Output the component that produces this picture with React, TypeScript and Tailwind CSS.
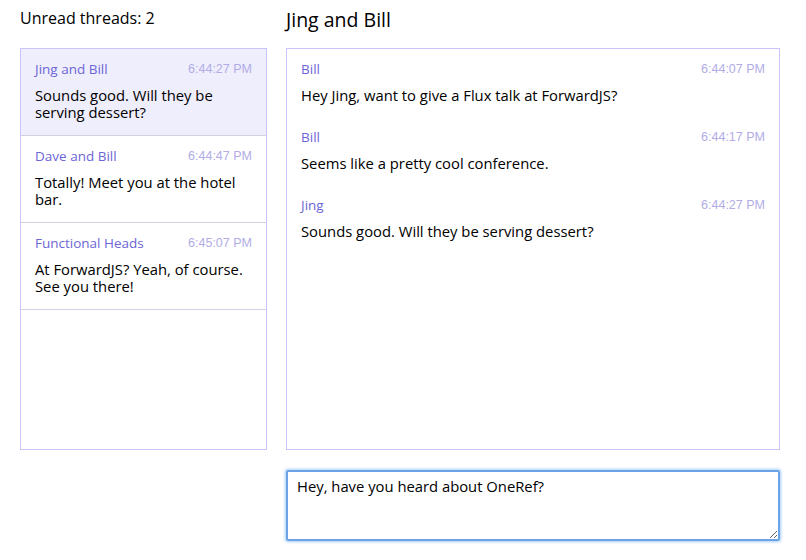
import React from 'react';

const threads = [
  { name: 'Jing and Bill', time: '6:44:27 PM', text: 'Sounds good. Will they be serving dessert?', active: true },
  { name: 'Dave and Bill', time: '6:44:47 PM', text: 'Totally! Meet you at the hotel bar.', active: false },
  { name: 'Functional Heads', time: '6:45:07 PM', text: 'At ForwardJS? Yeah, of course. See you there!', active: false },
];

const messages = [
  { author: 'Bill', time: '6:44:07 PM', text: 'Hey Jing, want to give a Flux talk at ForwardJS?' },
  { author: 'Bill', time: '6:44:17 PM', text: 'Seems like a pretty cool conference.' },
  { author: 'Jing', time: '6:44:27 PM', text: 'Sounds good. Will they be serving dessert?' },
];

const font = "font-['Open_Sans','Noto_Sans',sans-serif]";
const timeFont = "font-['Liberation_Sans',Arial,sans-serif]";

export default function App() {
  return (
    <div className={`${font} w-[806px] h-[560px] bg-white text-black flex gap-[19px] pl-[20px] pt-[8px]`}>
      {/* thread list */}
      <div className="w-[247px] flex flex-col">
        <div className="h-[20px] leading-[20px] text-[16px]">Unread threads: 2</div>
        <div className="mt-[20px] h-[402px] border border-[#c9c5fb] flex flex-col">
          {threads.map((t) => (
            <div
              key={t.name}
              className={`px-[14px] pt-[12px] pb-[14px] border-b border-[#d3d0e6] ${t.active ? 'bg-[#efeefd]' : 'bg-white'}`}
            >
              <div className="flex justify-between items-center h-[16px]">
                <span className="text-[13.5px] text-[#6d66d6]">{t.name}</span>
                <span className={`${timeFont} text-[12.5px] text-[#b1ace6]`}>{t.time}</span>
              </div>
              <p className="mt-[10px] text-[14.8px] leading-[17px]">{t.text}</p>
            </div>
          ))}
        </div>
      </div>

      {/* conversation */}
      <div className="w-[494px] flex flex-col">
        <div className="h-[24px] leading-[24px] text-[19.5px]">Jing and Bill</div>
        <div className="mt-[16px] h-[402px] border border-[#c9c5fb] px-[14px] pt-[12px]">
          {messages.map((m, i) => (
            <div key={i} className="mb-[25px]">
              <div className="flex justify-between items-center h-[16px]">
                <span className="text-[13.5px] text-[#6d66d6]">{m.author}</span>
                <span className={`${timeFont} text-[12.5px] text-[#b1ace6]`}>{m.time}</span>
              </div>
              <p className="mt-[10px] text-[14.8px] leading-[17px]">{m.text}</p>
            </div>
          ))}
        </div>
        <textarea
          defaultValue="Hey, have you heard about OneRef?"
          className="mt-[20px] h-[71px] w-[494px] border-2 border-[#6ba3e6] rounded-[2px] shadow-[0_0_3px_1px_#a8cdf5] px-[9px] py-[6px] text-[14.8px] leading-[17px] outline-none resize-y"
        />
      </div>
    </div>
  );
}
